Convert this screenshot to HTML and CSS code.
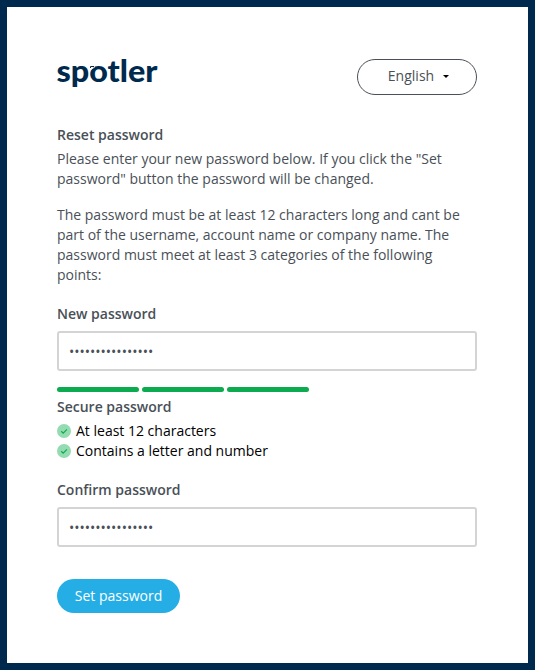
FILE: index.html
```html
<!DOCTYPE html>
<html lang="en">
<head>
<meta charset="utf-8">
<title>Reset password</title>
<link rel="stylesheet" href="styles.css">
</head>
<body>
<main class="panel">
  <header class="header">
    <svg class="logo" viewBox="0 0 102 34" role="img" aria-label="spotler">
      <text class="logo-text" x="-0.5" y="24.4" textLength="101" lengthAdjust="spacingAndGlyphs">spotler</text>
      <path class="logo-cut" d="M33 12.2 38 8.8"/>
      <path class="logo-tick" d="M33.5 10V8.5H37"/>
    </svg>
    <button class="language" type="button">English<span class="caret"></span></button>
  </header>
  <form>
    <h1 class="title">Reset password</h1>
    <p class="text">Please enter your new password below. If you click the "Set password" button the password will be changed.</p>
    <p class="text">The password must be at least 12 characters long and cant be part of the username, account name or company name. The password must meet at least 3 categories of the following points:</p>
    <label class="label" for="new">New password</label>
    <input class="field" id="new" type="text" value="••••••••••••••••">
    <div class="strength"><span class="bar"></span><span class="bar"></span><span class="bar"></span></div>
    <p class="label">Secure password</p>
    <ul class="rules">
      <li class="rule"><svg class="check" viewBox="0 0 14 14"><circle cx="7" cy="7" r="7"/><path d="M4.2 7.2 6.2 9.1 9.9 5.4"/></svg>At least 12 characters</li>
      <li class="rule"><svg class="check" viewBox="0 0 14 14"><circle cx="7" cy="7" r="7"/><path d="M4.2 7.2 6.2 9.1 9.9 5.4"/></svg>Contains a letter and number</li>
    </ul>
    <label class="label" for="confirm">Confirm password</label>
    <input class="field" id="confirm" type="text" value="••••••••••••••••">
    <button class="submit" type="button">Set password</button>
  </form>
</main>
</body>
</html>
```
FILE: styles.css
```css
* { box-sizing: border-box; }
body {
  margin: 0;
  height: 670px;
  padding: 7px;
  background: #002a4d;
  color: #495057;
  font: 14px/20px "Open Sans", sans-serif;
}
.panel { height: 656px; padding: 52px 51px 0 50px; background: #fff; }
.header { display: flex; justify-content: space-between; height: 66px; }
.logo { width: 102px; height: 34px; margin-top: -1px; overflow: visible; }
.logo-text { font: 900 31px Lato, sans-serif; fill: #002a4d; }
.logo-cut { stroke: #fff; stroke-width: 0.8; }
.logo-tick { fill: none; stroke: #002a4d; stroke-width: 1; }
.language {
  display: flex;
  align-items: center;
  justify-content: center;
  width: 120px;
  height: 36px;
  padding: 0 0 2px 3px;
  border: 1px solid #495057;
  border-radius: 18px;
  background: #fff;
  color: #495057;
  font: inherit;
}
.caret { margin-left: 9px; border: 3px solid transparent; border-top: 3px solid #000; border-bottom: 0; }
.title, .label { display: block; margin: 0; font-size: 14px; font-weight: 600; }
.title { margin-bottom: 4px; }
.text { margin: 0 0 16px; }
.text + .label { margin-top: 19px; }
.field {
  display: block;
  width: 420px;
  height: 40px;
  margin-top: 7px;
  padding: 0 10px;
  border: 2px solid #d4d4d4;
  border-radius: 3px;
  background: #fff;
  color: #495057;
  font: inherit;
}
.strength { display: flex; gap: 3px; margin: 16px 0 5px; }
.bar { width: 82px; height: 5px; border-radius: 3px; background: #0dab4f; }
.rules { margin: 4px 0 19px; padding: 0; list-style: none; color: #000; }
.rule { display: flex; align-items: center; gap: 5px; }
.check { width: 14px; height: 14px; fill: #94dbb1; }
.check path { fill: none; stroke: #0dab4f; stroke-width: 1.2; }
.submit {
  display: block;
  width: 123px;
  height: 34px;
  margin-top: 32px;
  padding: 0;
  border: 0;
  border-radius: 17px;
  background: #25aee6;
  color: #fff;
  font: inherit;
}
```
